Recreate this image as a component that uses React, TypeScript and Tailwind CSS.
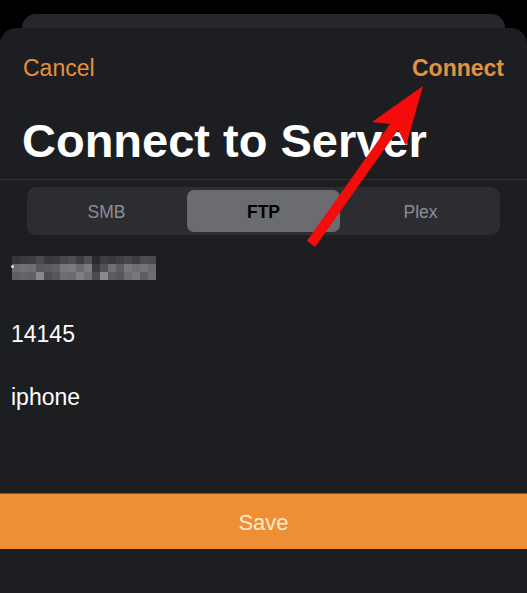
const mosaic = [
  ['#35363a', '#3a3b3f', '#3d3e42', '#4a4b4f', '#38393d', '#3a3b3f', '#47484c', '#4e4f53', '#3c3d41', '#505155', '#2a2b2f', '#3d3e42', '#38393d', '#3f4044', '#46474b', '#3c3d41', '#4d4e52', '#4a4b4f'],
  ['#6a6b6f', '#707175', '#6e6f73', '#58595d', '#5a5b5f', '#606165', '#78797d', '#7a7b7f', '#6a6b6f', '#7c7d81', '#3a3b3f', '#505155', '#6f7074', '#5c5d61', '#767779', '#6e6f73', '#737478', '#6a6b6f'],
  ['#5e5f63', '#646569', '#606165', '#88898d', '#4d4e52', '#56575b', '#6e6f73', '#6a6b6f', '#7e7f83', '#6e6f73', '#4a4b4f', '#8a8b8f', '#5b5c60', '#56575b', '#6e6f73', '#77787c', '#5c5d61', '#6e6f73'],
];

const tabs = ['SMB', 'FTP', 'Plex'];

export default function App() {
  return (
    <div className="relative h-[593px] w-[527px] overflow-hidden bg-black pt-[14px] font-['Liberation_Sans',Arial,sans-serif]">
      {/* sheet stacked behind */}
      <div className="mx-[22px] h-[14px] rounded-t-[14px] bg-[#26272b]" />

      <div className="flex h-[565px] flex-col rounded-t-[16px] bg-[#1d1e21]">
        <div className="flex items-center justify-between px-[23px] pt-[26px] text-[23px] leading-[28px] text-[#e3923f]">
          <span>Cancel</span>
          <span className="font-bold">Connect</span>
        </div>

        <h1 className="mt-[31px] px-[22px] text-[47px] font-bold leading-[56px] text-white">Connect to Server</h1>

        <div className="mt-[10px] h-px bg-[#2f3034]" />

        <div className="mx-[27px] mt-[7px] grid h-[48px] grid-cols-3 gap-[4px] rounded-[9px] bg-[#2c2d31] p-[3px]">
          {tabs.map((t) => (
            <div
              key={t}
              className={
                t === 'FTP'
                  ? 'flex items-center justify-center rounded-[7px] bg-[#6b6c70] pt-[2px] text-[17.5px] font-bold text-black'
                  : 'flex items-center justify-center pt-[2px] text-[17.5px] text-[#8d8e93]'
              }
            >
              {t}
            </div>
          ))}
        </div>

        <div className="relative ml-[12px] mt-[21px] grid w-[144px] grid-cols-[repeat(18,8px)] grid-rows-[repeat(3,8px)]">
          {mosaic.flat().map((c, i) => (
            <div key={i} style={{ backgroundColor: c }} />
          ))}
          <div className="absolute left-[-1px] top-[9px] h-[3px] w-[3px] rounded-full bg-white/80" />
        </div>

        <div className="ml-[11px] mt-[40px] text-[23px] leading-[28px] text-white">14145</div>
        <div className="ml-[11px] mt-[35px] text-[23px] leading-[28px] text-white">iphone</div>

        <div className="mt-[82px] flex h-[56px] items-center justify-center border-t border-[#8a5426] bg-[#ee8e35] pt-[2px] text-[22px] text-[#fdeacb]">
          Save
        </div>
      </div>

      {/* red annotation arrow */}
      <svg className="pointer-events-none absolute inset-0" width="527" height="593" viewBox="0 0 527 593">
        <polygon
          points="306.9,241.1 390,123.9 372,122 423,86 406,146 398.2,129.7 315.1,246.9"
          fill="#f40b0b"
        />
      </svg>
    </div>
  );
}
